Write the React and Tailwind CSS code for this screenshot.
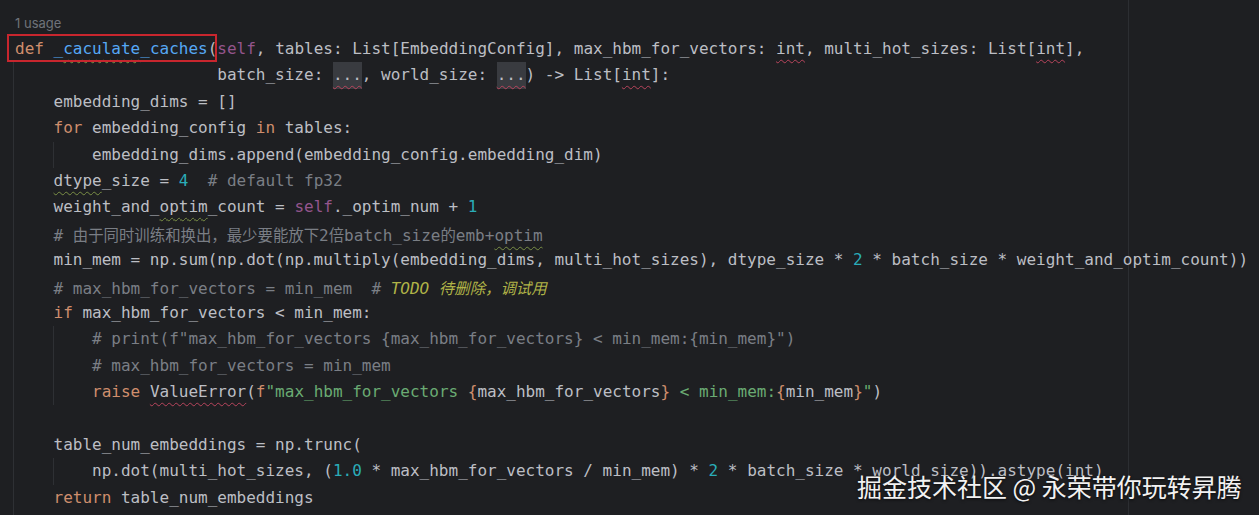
const wavyGreen =
  "underline decoration-wavy decoration-[#7a8f45] decoration-1 underline-offset-[5px]";
const wavyRed =
  "underline decoration-wavy decoration-[#b8445c] decoration-1 underline-offset-[5px]";

function Line({ children }) {
  return <div className="h-[26.4px] leading-[26.4px] whitespace-pre">{children}</div>;
}

function Kw({ children }) {
  return <span className="text-[#cf8e6d]">{children}</span>;
}

function Num({ children }) {
  return <span className="text-[#2aacb8]">{children}</span>;
}

function Cm({ children }) {
  return <span className="text-[#7a7e85]">{children}</span>;
}

function Str({ children }) {
  return <span className="text-[#6aab73]">{children}</span>;
}

function Self() {
  return <span className="text-[#94558d]">self</span>;
}

function Cjk({ children }) {
  return (
    <span className="font-['Noto_Sans_CJK_SC',sans-serif] text-[15.4px]">{children}</span>
  );
}

// folded "..." placeholder
function Ellipsis() {
  return (
    <span className={`inline-block bg-[#393b40] leading-[26.4px] ${wavyRed}`}>...</span>
  );
}

function Nested({ children }) {
  return <div className="ml-[calc(4ch-1px)] border-l border-[#2e3034]">{children}</div>;
}

export default function App() {
  return (
    <div className="relative w-[1259px] h-[515px] overflow-hidden bg-[#1e1f22] text-[16px] text-[#bcbec4] font-['DejaVu_Sans_Mono','Noto_Sans_CJK_SC',monospace]">
      <div className="flex h-full w-[1129px] flex-col border-r border-[#2c2e32] pl-[15px]">
        <div className="h-[36px] pt-[10px] leading-[26px] text-[13px] text-[#6f737a] font-['Inter',sans-serif]">
          1 usage
        </div>
        <Line>
          <span className="relative inline-block">
            <Kw>def</Kw>{" "}
            <span className="text-[#56a8f5]">
              _<span className={wavyGreen}>caculate</span>_caches
            </span>
            (
            <span className="absolute left-[-8px] right-[0px] top-[-2px] bottom-[0px] border-2 border-[#c8262e]" />
          </span>
          <Self />, tables: List[EmbeddingConfig], max_hbm_for_vectors:{" "}
          <span className={wavyRed}>int</span>, multi_hot_sizes: List[
          <span className={wavyRed}>int</span>],
        </Line>

        <div className="ml-[-2px] flex-1 border-l border-[#2e3034] pl-px">
          <Line>
            {"                     "}batch_size: <Ellipsis />, world_size: <Ellipsis />) -&gt; List[
            <span className={wavyRed}>int</span>]:
          </Line>
          <Line>{"    "}embedding_dims = []</Line>
          <Line>
            {"    "}
            <Kw>for</Kw> embedding_config <Kw>in</Kw> tables:
          </Line>
          <Nested>
            <Line>{"    "}embedding_dims.append(embedding_config.embedding_dim)</Line>
          </Nested>
          <Line>
            {"    "}
            <span className={wavyGreen}>dtype</span>_size = <Num>4</Num>
            {"  "}
            <Cm># default fp32</Cm>
          </Line>
          <Line>
            {"    "}weight_and_<span className={wavyGreen}>optim</span>_count = <Self />._optim_num +{" "}
            <Num>1</Num>
          </Line>
          <Line>
            {"    "}
            <Cm>
              # <Cjk>由于同时训练和换出，最少要能放下</Cjk>2<Cjk>倍</Cjk>batch_size<Cjk>的</Cjk>emb+
              <span className={wavyGreen}>optim</span>
            </Cm>
          </Line>
          <Line>
            {"    "}min_mem = np.sum(np.dot(np.multiply(embedding_dims, multi_hot_sizes), dtype_size *{" "}
            <Num>2</Num> * batch_size * weight_and_optim_count))
          </Line>
          <Line>
            {"    "}
            <Cm>{"# max_hbm_for_vectors = min_mem  # "}</Cm>
            <span className="italic text-[#b0b347]">
              TODO <Cjk>待删除，调试用</Cjk>
            </span>
          </Line>
          <Line>
            {"    "}
            <Kw>if</Kw> max_hbm_for_vectors &lt; min_mem:
          </Line>
          <Nested>
            <Line>
              {"    "}
              <Cm># print(f"max_hbm_for_vectors {"{max_hbm_for_vectors}"} &lt; min_mem:{"{min_mem}"}")</Cm>
            </Line>
            <Line>
              {"    "}
              <Cm># max_hbm_for_vectors = min_mem</Cm>
            </Line>
            <Line>
              {"    "}
              <Kw>raise</Kw> <span className={wavyRed}>ValueError</span>(<Kw>f</Kw>
              <Str>"max_hbm_for_vectors </Str>
              <Kw>{"{"}</Kw>max_hbm_for_vectors<Kw>{"}"}</Kw>
              <Str> &lt; min_mem:</Str>
              <Kw>{"{"}</Kw>min_mem<Kw>{"}"}</Kw>
              <Str>"</Str>)
            </Line>
          </Nested>
          <Line> </Line>
          <Line>{"    "}table_num_embeddings = np.trunc(</Line>
          <Nested>
            <Line>
              {"    "}np.dot(multi_hot_sizes, (<Num>1.0</Num> * max_hbm_for_vectors / min_mem) *{" "}
              <Num>2</Num> * batch_size * world_size)).astype(int)
            </Line>
          </Nested>
          <Line>
            {"    "}
            <Kw>return</Kw> table_num_embeddings
          </Line>
        </div>
      </div>

      <div className="absolute left-[857px] top-[472px] whitespace-nowrap text-[25px] leading-[28px] text-[#f2f2f2] font-['Noto_Sans_CJK_SC',sans-serif] [text-shadow:0_1px_3px_rgba(0,0,0,0.7)]">
        掘金技术社区 @ 永荣带你玩转昇腾
      </div>
    </div>
  );
}
